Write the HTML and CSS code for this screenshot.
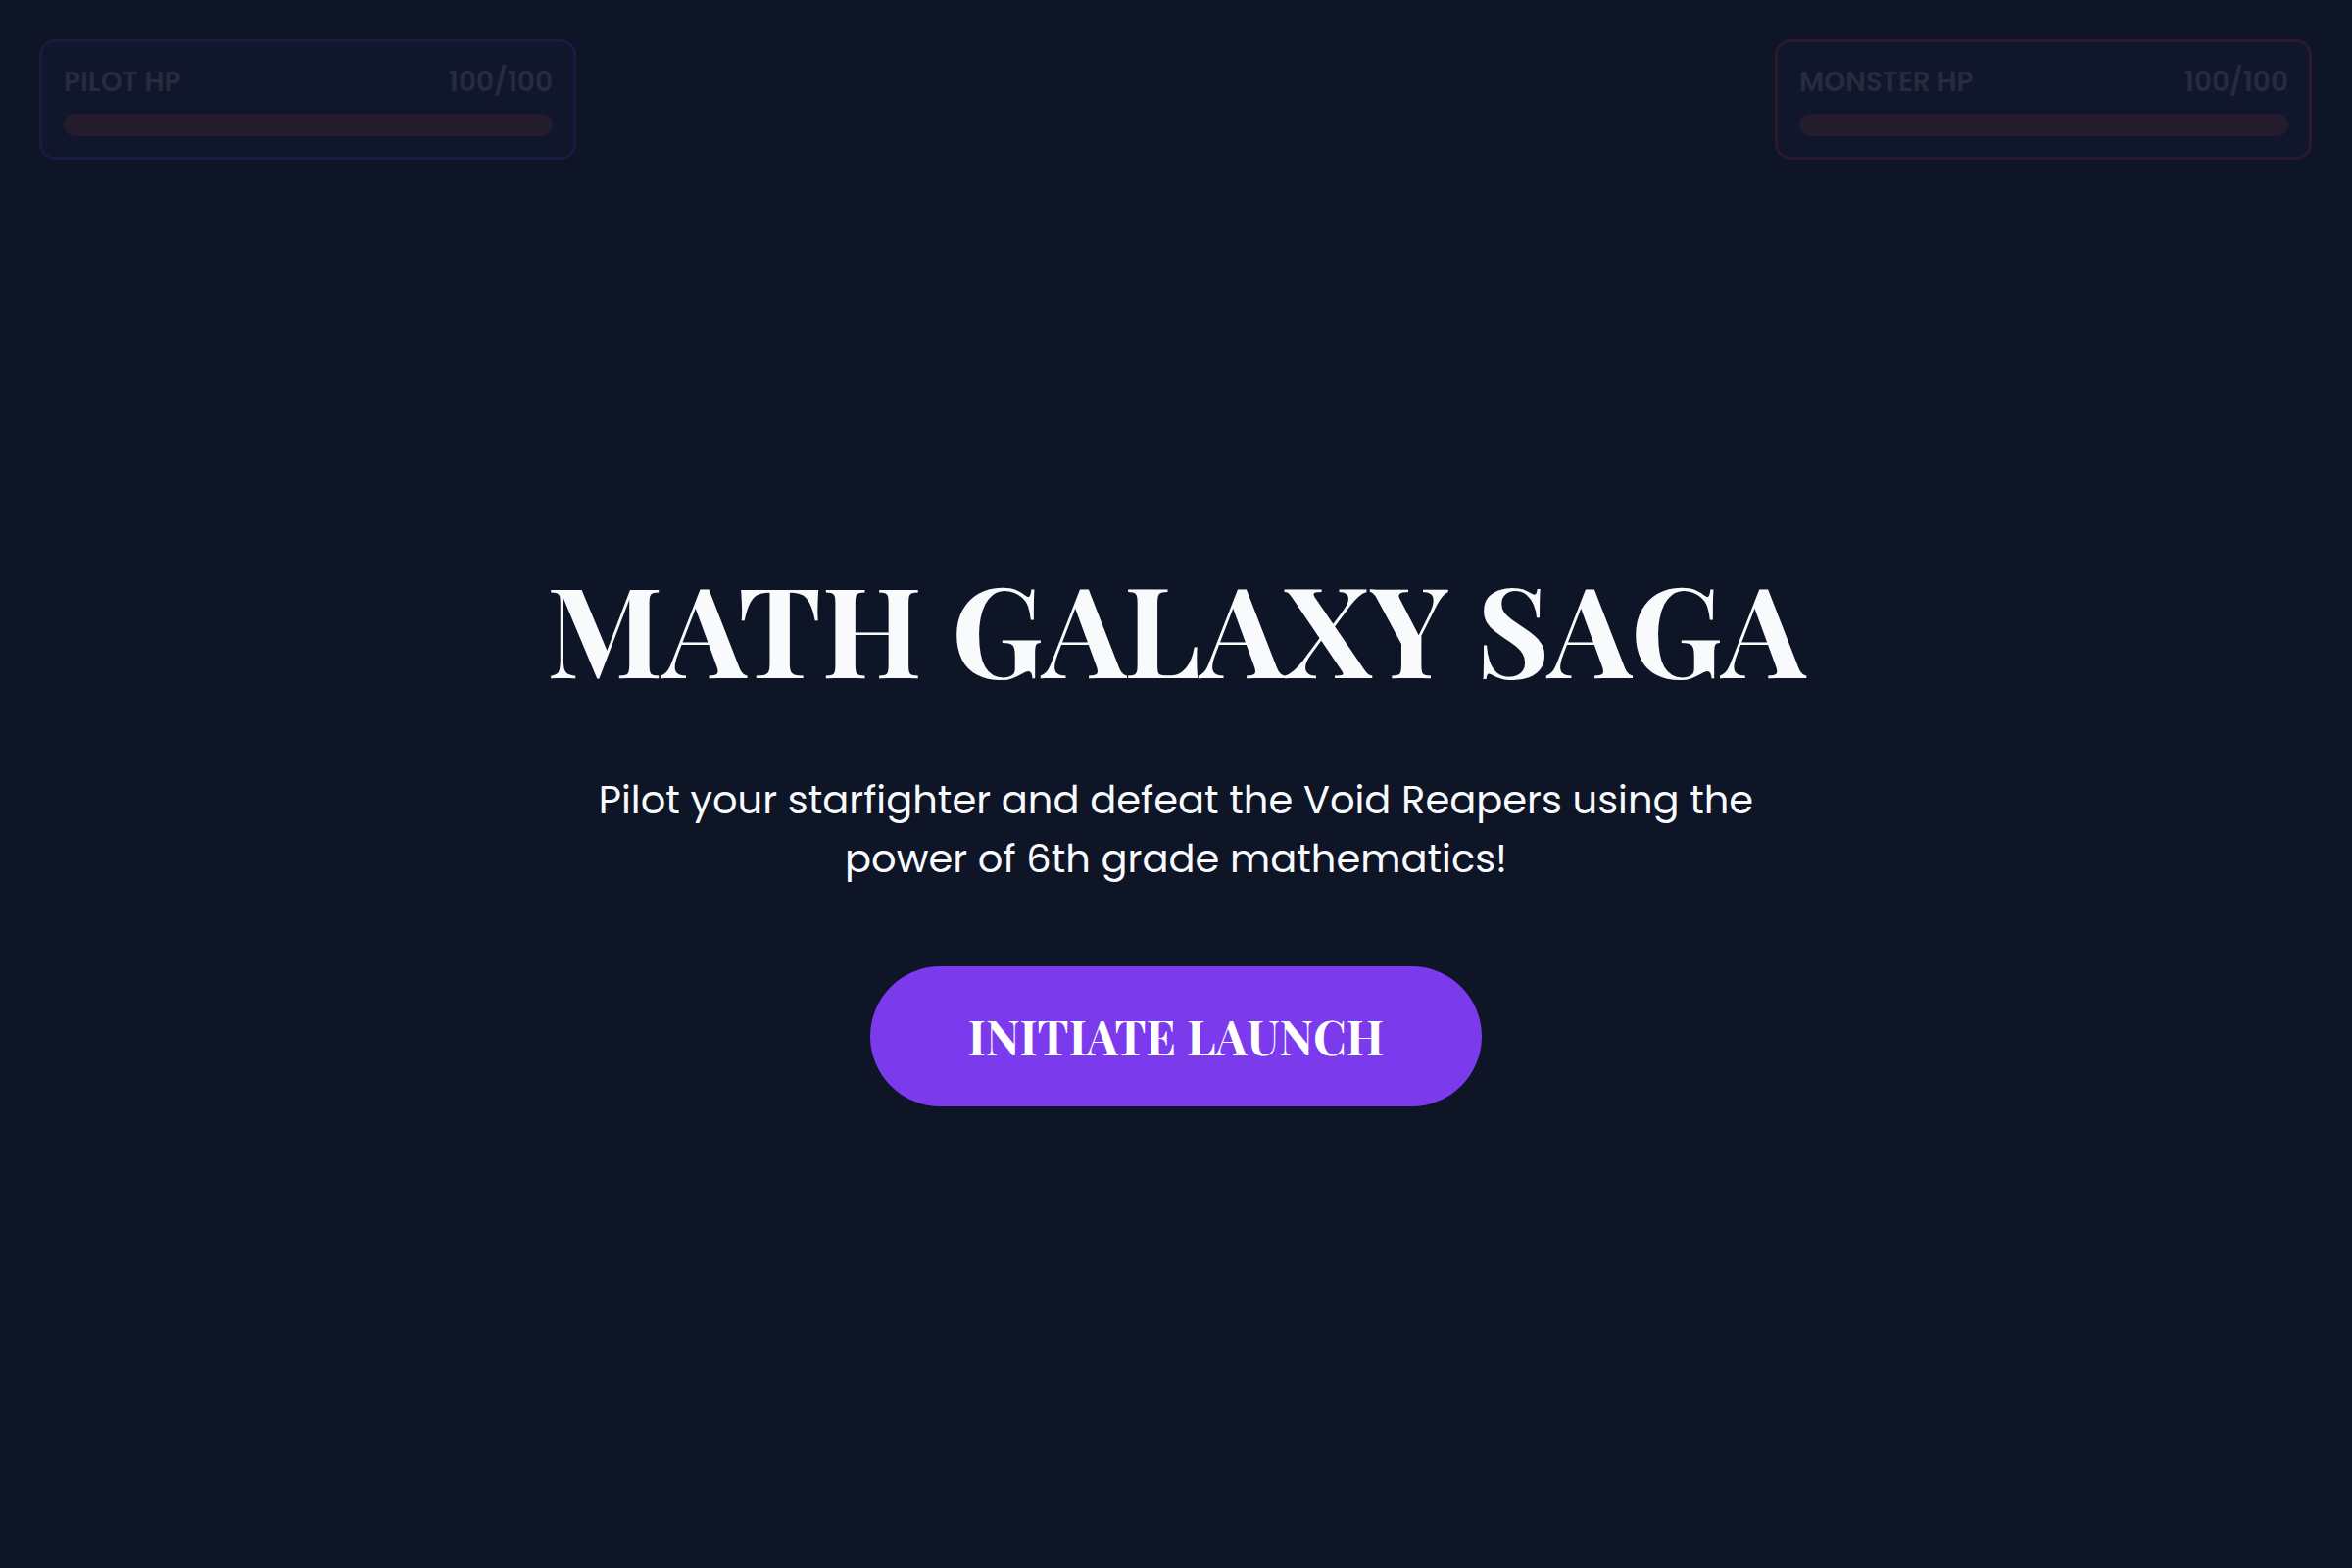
FILE: index.html
```html
<!DOCTYPE html>
<html>
  <head>
    <title>Math Galaxy Saga</title>
    <link rel="stylesheet" href="styles.css">
  </head>
  <body>
    <!-- Barras de vida (esmaecidas enquanto o jogo não começou) -->
    <div class="hud">
      <div class="hp-panel pilot">
        <div class="hp-header">
          <span class="hp-label">PILOT HP</span>
          <span class="hp-value">100/100</span>
        </div>
        <div class="hp-track"></div>
      </div>
      <div class="hp-panel monster">
        <div class="hp-header">
          <span class="hp-label">MONSTER HP</span>
          <span class="hp-value">100/100</span>
        </div>
        <div class="hp-track"></div>
      </div>
    </div>

    <div class="start-screen">
      <h1 class="game-title">MATH GALAXY SAGA</h1>
      <p class="game-intro">
        Pilot your starfighter and defeat the Void Reapers using the
        power of 6th grade mathematics!
      </p>
      <button class="launch-button">INITIATE LAUNCH</button>
    </div>
  </body>
</html>
```

FILE: styles.css
```css
body {
  background-color: #0e1527;
  color: #f8fafc;
  font-family: "Poppins", "Open Sans", sans-serif;
  margin: 0;
  min-height: 100vh;
  display: flex;
  flex-direction: column;
  overflow: hidden;
}

/* HUD */
.hud {
  display: flex;
  justify-content: space-between;
  padding: 40px 41px 0 40px;
}

.hp-panel {
  width: 548px;
  box-sizing: border-box;
  padding: 27px 21px 21px 22px;
  background-color: #10162b;
  border: 3px solid #1d1a42;
  border-radius: 16px;
}

.hp-panel.monster {
  border-color: #2a1a2e;
}

.hp-header {
  display: flex;
  justify-content: space-between;
  font-size: 28px;
  line-height: 28px;
  font-weight: 600;
  color: #262c3e;
}

.hp-track {
  margin-top: 18px;
  height: 23px;
  border-radius: 12px;
  background-color: #241b2c;
}

/* Tela inicial */
.start-screen {
  flex: 1;
  display: flex;
  flex-direction: column;
  align-items: center;
  justify-content: center;
  padding-bottom: 71px;
  text-align: center;
}

.game-title {
  font-family: "Playfair Display", "Liberation Serif", serif;
  font-size: 128px;
  line-height: 1.2;
  font-weight: bold;
  margin: 0 0 69px;
}

.game-intro {
  font-size: 40px;
  line-height: 60px;
  width: 1240px;
  margin: 0 0 80px;
}

.launch-button {
  font-family: "Playfair Display", "Liberation Serif", serif;
  font-size: 48px;
  font-weight: bold;
  line-height: 143px;
  height: 143px;
  padding: 0 100px;
  color: #ffffff;
  background-color: #7c3aed;
  border: none;
  border-radius: 72px;
  cursor: pointer;
}
```
